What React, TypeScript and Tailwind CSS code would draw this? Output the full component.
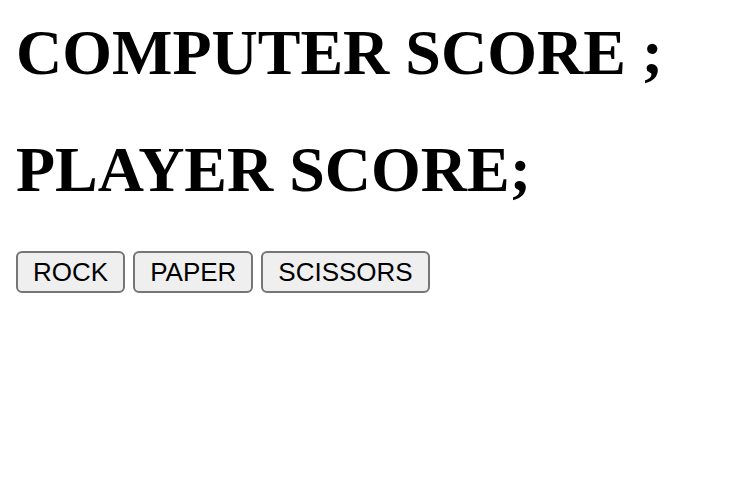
export default function App() {
  const moves = ["ROCK", "PAPER", "SCISSORS"];

  return (
    <div className="min-h-screen bg-white px-4 text-black">
      <h1 className="mt-[16px] font-['Liberation_Serif',serif] text-[64px] font-bold leading-[74px]">
        COMPUTER SCORE ;
      </h1>
      <h1 className="mt-[43px] font-['Liberation_Serif',serif] text-[64px] font-bold leading-[74px]">
        PLAYER SCORE;
      </h1>
      <div className="mt-[44px] flex gap-2">
        {moves.map((m) => (
          <button
            key={m}
            className="h-[42px] rounded-[6px] border-2 border-[#767676] bg-[#efefef] px-[15px] font-['Liberation_Sans',Arial,sans-serif] text-[26px] leading-none text-black"
          >
            {m}
          </button>
        ))}
      </div>
    </div>
  );
}
